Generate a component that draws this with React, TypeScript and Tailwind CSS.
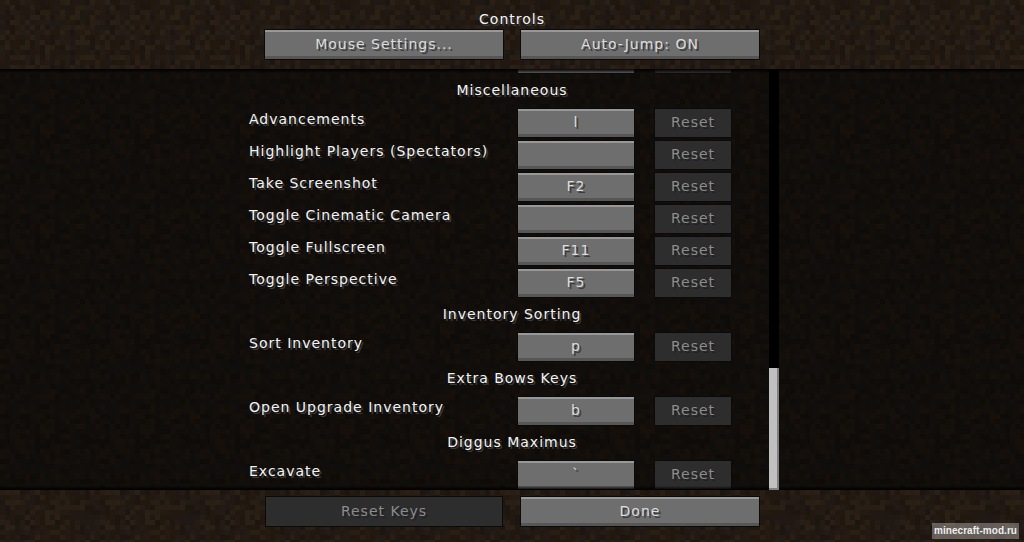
const headerTones = ['#251a12', '#20170f', '#291e14', '#1c1510', '#231b16', '#221810', '#2b2016', '#1f1814']
const listTones = ['#120e0a', '#100c09', '#140f0b', '#0e0b08', '#110e0c', '#110d0a', '#160f0a', '#100e0c']

// small seeded generator so the dirt looks the same on every load
function dirtCells(seed: number) {
  const cells: { x: number; y: number; tone: number }[] = []
  let s = seed
  for (let y = 0; y < 20; y++) {
    for (let x = 0; x < 20; x++) {
      s = (s * 1103515245 + 12345) & 0x7fffffff
      cells.push({ x: x * 5, y: y * 5, tone: (s >> 16) % 8 })
    }
  }
  return cells
}

function Dirt({ id, tones, seed }: { id: string; tones: string[]; seed: number }) {
  return (
    <svg className="absolute inset-0 w-full h-full" aria-hidden="true">
      <defs>
        <pattern id={id} width="100" height="100" patternUnits="userSpaceOnUse">
          {dirtCells(seed).map((c, i) => (
            <rect key={i} x={c.x} y={c.y} width="5" height="5" fill={tones[c.tone]} />
          ))}
        </pattern>
      </defs>
      <rect width="100%" height="100%" fill={`url(#${id})`} />
    </svg>
  )
}

function WideButton({ label, disabled }: { label: string; disabled?: boolean }) {
  if (disabled) {
    return (
      <button className="w-[238px] h-[31px] mx-px border border-[#0a0a0a] bg-[#2d2d2d] text-[#8c8c8c] [text-shadow:2px_2px_0_#222222]">
        {label}
      </button>
    )
  }
  return (
    <button className="w-[240px] h-[31px] border border-[#0a0a0a] bg-[#6e6e6e] text-[#dcdcdc] shadow-[inset_0_2px_0_#989898,inset_0_-3px_0_#565656] [text-shadow:2px_2px_0_#3c3c3c]">
      {label}
    </button>
  )
}

function KeyRow({ label, keyName, hideReset }: { label: string; keyName: string; hideReset?: boolean }) {
  return (
    <div className="flex h-8 pl-[249px] items-start">
      <span className="w-[268px] h-5 leading-5 text-[#f4f4f4] [text-shadow:2px_2px_0_#3a3a3a] whitespace-nowrap">{label}</span>
      <button className="w-[118px] h-[30px] -mt-px pb-px border border-[#0a0a0a] bg-[#6e6e6e] text-[#dcdcdc] shadow-[inset_0_2px_0_#989898,inset_0_-3px_0_#565656] [text-shadow:2px_2px_0_#3c3c3c]">
        {keyName}
      </button>
      <button className="w-[78px] h-[30px] -mt-px pb-px ml-[19px] border border-[#0a0a0a] bg-[#2d2d2d] text-[#8c8c8c] [text-shadow:2px_2px_0_#222222]">
        {hideReset ? '' : 'Reset'}
      </button>
    </div>
  )
}

function SectionTitle({ title }: { title: string }) {
  return (
    <div className="h-8 pt-[3px] leading-5 text-center text-[#f4f4f4] [text-shadow:2px_2px_0_#3a3a3a]">{title}</div>
  )
}

export default function App() {
  return (
    <div className="w-[1024px] h-[542px] flex flex-col overflow-hidden bg-black font-['DejaVu_Sans',sans-serif] text-[14px] tracking-[1px]">
      <header className="relative h-[69px] shrink-0">
        <Dirt id="dirt-top" tones={headerTones} seed={7} />
        <div className="relative flex flex-col items-center pt-[9px]">
          <div className="h-5 leading-5 text-[#f4f4f4] [text-shadow:2px_2px_0_#3a3a3a]">Controls</div>
          <div className="flex gap-4">
            <WideButton label="Mouse Settings..." />
            <WideButton label="Auto-Jump: ON" />
          </div>
        </div>
      </header>

      <main className="relative h-[421px] shrink-0 overflow-hidden">
        <Dirt id="dirt-list" tones={listTones} seed={23} />
        <div className="relative -mt-6">
          <KeyRow label="" keyName="" hideReset />
          <SectionTitle title="Miscellaneous" />
          <KeyRow label="Advancements" keyName="l" />
          <KeyRow label="Highlight Players (Spectators)" keyName="" />
          <KeyRow label="Take Screenshot" keyName="F2" />
          <KeyRow label="Toggle Cinematic Camera" keyName="" />
          <KeyRow label="Toggle Fullscreen" keyName="F11" />
          <KeyRow label="Toggle Perspective" keyName="F5" />
          <SectionTitle title="Inventory Sorting" />
          <KeyRow label="Sort Inventory" keyName="p" />
          <SectionTitle title="Extra Bows Keys" />
          <KeyRow label="Open Upgrade Inventory" keyName="b" />
          <SectionTitle title="Diggus Maximus" />
          <KeyRow label="Excavate" keyName="`" />
        </div>
        {/* edge shadows where the list meets the dirt bars */}
        <div className="absolute top-0 inset-x-0 h-1 bg-gradient-to-b from-black to-transparent" />
        <div className="absolute bottom-0 inset-x-0 h-1 bg-gradient-to-t from-black to-transparent" />
        {/* scrollbar */}
        <div className="absolute top-0 bottom-0 left-[769px] w-[10px] bg-black flex flex-col justify-end">
          <div className="h-[122px] bg-[#c0c0c0] border-r-2 border-b-2 border-[#808080]" />
        </div>
      </main>

      <footer className="relative flex-1">
        <Dirt id="dirt-bottom" tones={headerTones} seed={41} />
        <div className="relative flex justify-center gap-4 pt-[6px]">
          <WideButton label="Reset Keys" disabled />
          <WideButton label="Done" />
        </div>
        <div className="absolute right-[5px] bottom-[3px] w-[87px] h-4 bg-white/30 text-center text-[#eeeeee] whitespace-nowrap font-['Liberation_Sans',sans-serif] font-bold text-[10px] leading-4 tracking-[0.05px]">
          minecraft-mod.ru
        </div>
      </footer>
    </div>
  )
}
